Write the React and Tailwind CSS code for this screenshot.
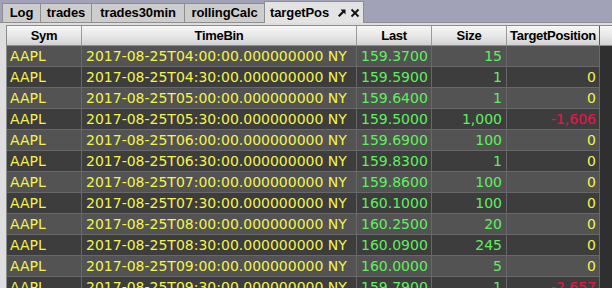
import React from "react";

const rows = [
  ["04:00", "159.3700", "15", ""],
  ["04:30", "159.5900", "1", "0"],
  ["05:00", "159.6400", "1", "0"],
  ["05:30", "159.5000", "1,000", "-1,606"],
  ["06:00", "159.6900", "100", "0"],
  ["06:30", "159.8300", "1", "0"],
  ["07:00", "159.8600", "100", "0"],
  ["07:30", "160.1000", "100", "0"],
  ["08:00", "160.2500", "20", "0"],
  ["08:30", "160.0900", "245", "0"],
  ["09:00", "160.0000", "5", "0"],
  ["09:30", "159.7900", "1", "-2,657"],
];

const tabs = [
  { label: "Log", w: "w-[38px]" },
  { label: "trades", w: "w-[51px]" },
  { label: "trades30min", w: "w-[93px]" },
  { label: "rollingCalc", w: "w-[80px]" },
];

function Tab({ label, w }) {
  return (
    <div
      className={`${w} h-[19px] flex items-center justify-center bg-[#cdcdcd] border-t border-l border-[#8e8e8e] text-[13px] font-bold text-black tracking-[-0.1px]`}
      style={{}}
    >
      {label}
    </div>
  );
}

export default function App() {
  return (
    <div
      className="w-[612px] h-[288px] overflow-hidden bg-[#a1a2b7] flex flex-col"
      style={{ fontFamily: '"Liberation Sans", Arial, sans-serif' }}
    >
      {/* tab bar */}
      <div className="h-[22px] flex items-end pl-[2px] shrink-0">
        {tabs.map((t) => (
          <Tab key={t.label} {...t} />
        ))}
        <div className="w-[100px] h-[22px] flex items-center bg-[#e3e3e3] border-t border-l border-r border-[#8e8e8e] pl-[5px] relative top-[1px] z-10">
          <span className="text-[13px] font-bold text-black tracking-[-0.1px]">targetPos</span>
          <svg width="10" height="10" viewBox="0 0 10 10" className="ml-[8px]">
            <path d="M3.5 1.5 H8.5 V6.5 L6.8 4.8 L2.5 9 L1 7.5 L5.2 3.2 Z" fill="#111" />
          </svg>
          <svg width="10" height="10" viewBox="0 0 10 10" className="ml-[3px]">
            <path d="M1.5 1.5 L8.5 8.5 M8.5 1.5 L1.5 8.5" stroke="#111" strokeWidth="1.8" />
          </svg>
        </div>
      </div>

      {/* panel */}
      <div className="flex-1 bg-[#dedede] border-t border-[#8e8e8e] pl-[6px] pt-[2px] flex flex-col min-h-0">
        <div className="flex-1 flex flex-col bg-[#2f2f2f] border-l border-t border-[#8a8a8a] min-h-0">
          {/* header */}
          <div
            className="h-[20px] flex shrink-0 border-b border-[#8d8d8d] bg-gradient-to-b from-[#f7f7f7] via-[#e8e8e8] to-[#d2d2d2] text-[13px] font-bold text-black tracking-[-0.3px]"
          >
            <div className="w-[75px] flex items-center justify-center border-r border-[#9a9a9a]">Sym</div>
            <div className="w-[275px] flex items-center justify-center border-r border-[#9a9a9a]">TimeBin</div>
            <div className="w-[75px] flex items-center justify-center border-r border-[#9a9a9a]">Last</div>
            <div className="w-[75px] flex items-center justify-center border-r border-[#9a9a9a]">Size</div>
            <div className="w-[93px] flex items-center justify-center border-r border-[#5a5a5a]">TargetPosition</div>
            <div className="flex-1" />
          </div>
          {/* rows */}
          <div
            className="flex flex-col text-[14px]"
            style={{ fontFamily: '"DejaVu Sans", Verdana, sans-serif' }}
          >
            {rows.map((r, i) => {
              const bg = i % 2 === 0 ? "bg-[#535353]" : "bg-[#3d3d3d]";
              const neg = r[3].startsWith("-");
              return (
                <div key={i} className={`h-[21px] flex shrink-0`}>
                  <div className={`w-[75px] ${bg} border-r border-b border-[#686868] flex items-center pl-[3px] text-[#f4f44a]`}>
                    AAPL
                  </div>
                  <div className={`w-[275px] ${bg} border-r border-b border-[#686868] flex items-center pl-[4px] text-[#f4f44a] whitespace-nowrap`}>
                    {`2017-08-25T${r[0]}:00.000000000 NY`}
                  </div>
                  <div className={`w-[75px] ${bg} border-r border-b border-[#686868] flex items-center pl-[4px] text-[#5ef05e]`}>
                    {r[1]}
                  </div>
                  <div className={`w-[75px] ${bg} border-r border-b border-[#686868] flex items-center justify-end pr-[4px] text-[#5ef05e]`}>
                    {r[2]}
                  </div>
                  <div
                    className={`w-[93px] ${bg} border-r border-b border-[#686868] flex items-center justify-end pr-[3px] ${
                      neg ? "text-[#f0114a]" : "text-[#f4f44a]"
                    }`}
                  >
                    {r[3]}
                  </div>
                </div>
              );
            })}
          </div>
        </div>
      </div>
    </div>
  );
}
